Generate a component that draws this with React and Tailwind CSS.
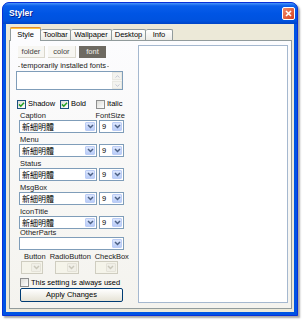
import React from "react";

const Chevron = ({ color = "#4D6185" }) => (
  <svg width="7" height="5" viewBox="0 0 7 5">
    <path d="M1 1 L3.5 3.5 L6 1" fill="none" stroke={color} strokeWidth="1.5" />
  </svg>
);

function Combo({ value, className = "", disabled = false, cjk = false }) {
  return (
    <div
      className={
        "flex h-[13px] border " +
        (disabled ? "border-[#CFCDC0] bg-[#F5F4EA] " : "border-[#7F9DB9] bg-white ") +
        className
      }
    >
      <div
        className={
          "flex-1 pl-[2px] flex items-center overflow-hidden whitespace-nowrap " +
          (cjk ? "font-['Noto_Sans_CJK_TC',sans-serif] text-[8px] leading-none" : "text-[7.5px] leading-none")
        }
      >
        {value}
      </div>
      <div
        className={
          "w-[10px] my-[1px] mr-[1px] rounded-[1px] flex items-center justify-center " +
          (disabled
            ? "bg-[#F0EFE7] border border-[#E4E2D8]"
            : "bg-[linear-gradient(to_bottom,#DCE6FD,#B9CCF8)] border border-[#BCCDF5]")
        }
      >
        <Chevron color={disabled ? "#C9C7BA" : "#4D6185"} />
      </div>
    </div>
  );
}

function Check({ checked }) {
  return (
    <span
      className={
        "w-[9px] h-[9px] shrink-0 border bg-[linear-gradient(135deg,#DCDCD7,#FFFFFF)] flex items-center justify-center " +
        (checked ? "border-[#1C5180]" : "border-[#8E8F8F]")
      }
    >
      {checked && (
        <svg width="7" height="7" viewBox="0 0 7 7">
          <path d="M1 3.4 L2.8 5.2 L6 1.8" stroke="#21A121" strokeWidth="1.5" fill="none" />
        </svg>
      )}
    </span>
  );
}

function Label({ children, className = "" }) {
  return (
    <div className={"h-[11px] flex items-end pl-[4px] text-[7.5px] leading-[9px] text-[#222] " + className}>
      {children}
    </div>
  );
}

function FontRow({ label }) {
  return (
    <div>
      <div className="h-[11px] flex items-end text-[7.5px] leading-[9px] text-[#222]">
        <span className="pl-[4px] w-[81px]">{label}</span>
        {label === "Caption" && <span>FontSize</span>}
      </div>
      <div className="flex pl-[3px]">
        <Combo value="新細明體" cjk className="w-[78px]" />
        <Combo value="9" className="w-[25px] ml-[2px]" />
      </div>
    </div>
  );
}

export default function App() {
  const tabs = ["Toolbar", "Wallpaper", "Desktop", "Info"];
  const tabWidths = ["w-[30px]", "w-[41px]", "w-[34px]", "w-[27px]"];

  return (
    <div className="w-[303px] h-[320px] bg-white pt-[2px] pl-[2px] overflow-hidden font-['Liberation_Sans',Arial,sans-serif] text-black">
      {/* window */}
      <div className="w-[296px] h-[314px] flex flex-col rounded-t-[7px] bg-[#0054E3] border border-[#0831D9] shadow-[2px_2px_2px_rgba(0,0,0,0.35)]">
        {/* title bar */}
        <div className="h-[21px] shrink-0 rounded-t-[6px] flex items-center justify-between pl-[6px] pr-[2px] bg-[linear-gradient(to_bottom,#4A94F8_0%,#0A5EEB_14%,#0055E4_50%,#0052DE_85%,#0044C6_100%)]">
          <span className="text-white font-bold text-[8.5px] [text-shadow:1px_1px_0_#0A1E8C]">Styler</span>
          <div className="w-[13px] h-[13px] rounded-[2px] border border-white bg-[linear-gradient(135deg,#F08A6A,#D9411E)] flex items-center justify-center">
            <svg width="7" height="7" viewBox="0 0 7 7">
              <path d="M1 1 L6 6 M6 1 L1 6" stroke="white" strokeWidth="1.6" />
            </svg>
          </div>
        </div>

        {/* body */}
        <div className="flex-1 mx-[3px] mb-[3px] bg-[#ECE9D8] pt-[3px] pl-[3px] pr-[2px] pb-[3px] flex flex-col">
          {/* tabs */}
          <div className="h-[13px] flex items-end pl-[1px] relative z-10">
            <div className="w-[31px] h-[14px] -mb-[1px] bg-[#FCFCFE] border-x border-[#919B9C] rounded-t-[2px] flex flex-col">
              <div className="h-[2px] bg-[#FFC83C] border-t border-[#E68B2C] rounded-t-[2px] -mx-[1px]" />
              <div className="flex-1 flex items-center justify-center text-[7.5px] leading-none">Style</div>
            </div>
            {tabs.map((t, i) => (
              <div
                key={t}
                className={
                  "h-[11px] border-t border-r border-[#919B9C] rounded-t-[2px] bg-[linear-gradient(to_bottom,#FFFFFF,#ECEBE6)] flex items-center justify-center text-[7.5px] leading-none " +
                  tabWidths[i]
                }
              >
                {t}
              </div>
            ))}
          </div>

          {/* panel */}
          <div className="flex-1 border border-[#919B9C] bg-[linear-gradient(to_bottom,#FCFCFE,#F4F3EE)] flex pt-[4px] pb-[5px] pr-[3px]">
            {/* left column */}
            <div className="w-[109px] ml-[6px] flex flex-col">
              {/* sub buttons */}
              <div className="flex h-[12px] mt-[1px] text-[7.5px] leading-none">
                <div className="w-[27px] ml-[2px] flex items-center justify-center bg-[#F7F6F2] border-r border-b border-[#DAD7CC] text-[#444]">folder</div>
                <div className="w-[28px] ml-[3px] flex items-center justify-center bg-[#F7F6F2] border-r border-b border-[#DAD7CC] text-[#444]">color</div>
                <div className="w-[27px] ml-[3px] flex items-center justify-center bg-[#6E6A62] text-[#F2F0EA]">font</div>
              </div>

              {/* temporarily installed fonts */}
              <div className="h-[8px] mt-[4px] flex items-center pl-[2px] text-[7.5px] leading-none text-[#222]">
                <span className="w-[2px] h-px bg-[#A9A79C] mr-[1px]" />
                temporarily installed fonts
                <span className="w-[2px] h-px bg-[#A9A79C] ml-[1px]" />
              </div>
              <div className="h-[19px] w-[107px] mt-[1px] border border-[#7F9DB9] bg-white flex justify-end">
                <div className="w-[10px] flex flex-col justify-between bg-[#F6F6F3]">
                  <div className="h-[8px] flex items-center justify-center bg-[#F3F3EF] border border-[#E8E8E2]">
                    <svg width="5" height="3" viewBox="0 0 5 3">
                      <path d="M0.5 2.5 L2.5 0.7 L4.5 2.5" stroke="#C4C8D4" strokeWidth="1" fill="none" />
                    </svg>
                  </div>
                  <div className="h-[8px] flex items-center justify-center bg-[#F3F3EF] border border-[#E8E8E2]">
                    <svg width="5" height="3" viewBox="0 0 5 3">
                      <path d="M0.5 0.5 L2.5 2.3 L4.5 0.5" stroke="#C4C8D4" strokeWidth="1" fill="none" />
                    </svg>
                  </div>
                </div>
              </div>

              {/* checkboxes */}
              <div className="h-[10px] mt-[9px] flex items-center pl-[1px] text-[7.5px] leading-none">
                <div className="w-[43px] flex items-center gap-[2px]">
                  <Check checked />
                  <span>Shadow</span>
                </div>
                <div className="w-[36px] flex items-center gap-[2px]">
                  <Check checked />
                  <span>Bold</span>
                </div>
                <div className="flex items-center gap-[2px]">
                  <Check />
                  <span>Italic</span>
                </div>
              </div>

              <FontRow label="Caption" />
              <FontRow label="Menu" />
              <FontRow label="Status" />
              <FontRow label="MsgBox" />
              <FontRow label="IconTitle" />

              {/* other parts */}
              <div className="h-[8px] flex items-end pl-[4px] text-[7.5px] leading-[8px] text-[#222]">OtherParts</div>
              <div className="pl-[3px]">
                <Combo value="" className="w-[105px]" />
              </div>

              <div className="flex text-[7.5px]">
                <div className="w-[34px] pl-[4px]">
                  <Label className="pl-0">Button</Label>
                  <Combo value="" disabled className="w-[22px] ml-[1px]" />
                </div>
                <div className="w-[45px]">
                  <Label className="pl-0">RadioButton</Label>
                  <Combo value="" disabled className="w-[24px] ml-[9px]" />
                </div>
                <div>
                  <Label className="pl-0">CheckBox</Label>
                  <Combo value="" disabled className="w-[23px] ml-[4px]" />
                </div>
              </div>

              {/* always used */}
              <div className="h-[9px] mt-[4px] pl-[4px] flex items-center gap-[2px] text-[7.5px] leading-none">
                <Check />
                <span>This setting is always used</span>
              </div>

              <button className="h-[14px] w-[103px] mt-[1px] ml-[4px] border border-[#003C74] rounded-[2px] bg-[linear-gradient(to_bottom,#FFFFFF,#E6E3D6)] text-[7.5px] leading-none flex items-center justify-center">
                Apply Changes
              </button>
            </div>

            {/* preview */}
            <div className="flex-1 ml-[13px] border border-[#A5B8CF] bg-white" />
          </div>
        </div>
      </div>
    </div>
  );
}
